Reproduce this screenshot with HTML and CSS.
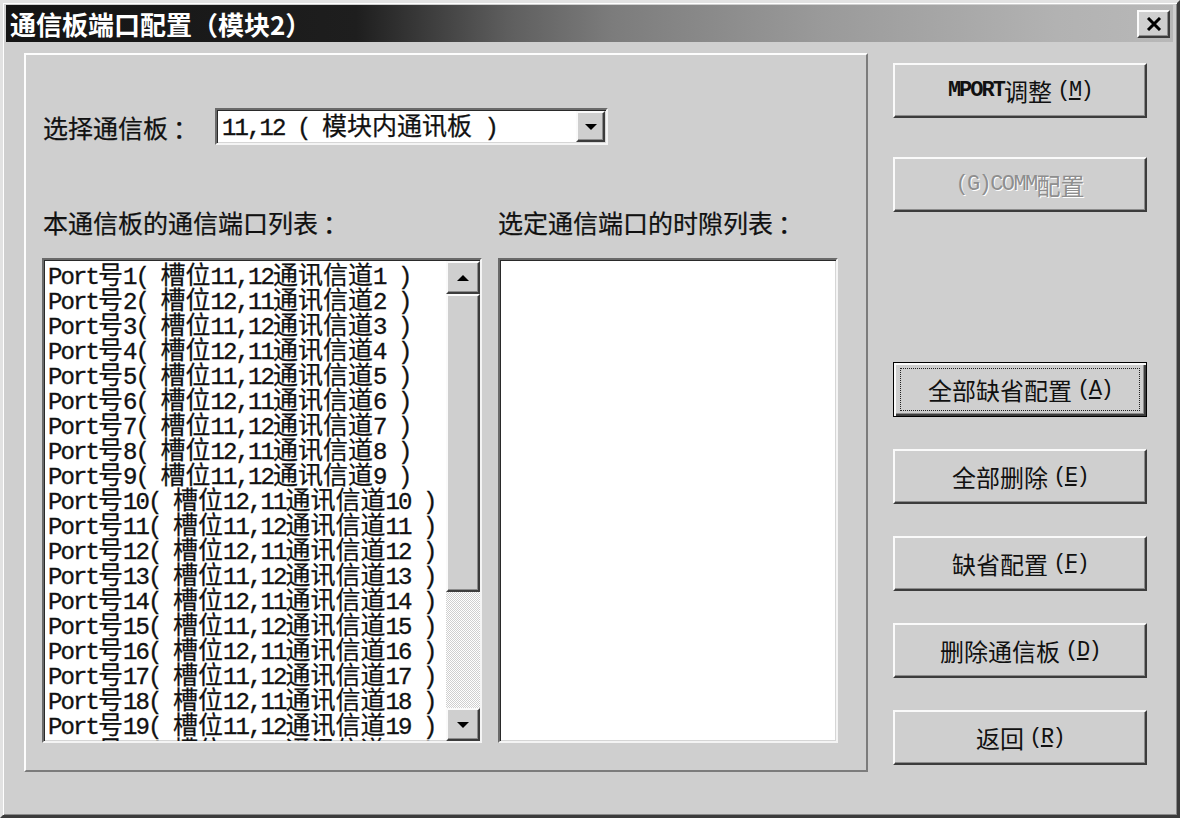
FILE: index.html
```html
<!DOCTYPE html>
<html lang="zh-CN">
<head>
<meta charset="utf-8">
<title>通信板端口配置（模块2）</title>
<link rel="stylesheet" href="styles.css">
</head>
<body>
<div class="window">
  <div class="titlebar">
    <div class="title">通信板端口配置（模块2）</div>
    <div class="close">
      <svg width="16" height="14" viewBox="0 0 16 14"><path d="M2 1 L14 13 M14 1 L2 13" stroke="#000" stroke-width="3" fill="none"/></svg>
    </div>
  </div>
  <div class="main">
    <div class="group">
      <div class="combo-row">
        <div class="label sel-label">选择通信板<span class="colon">：</span></div>
        <div class="combo">
          <div class="combo-text"><span class="a">11,12 ( </span>模块内通讯板<span class="a"> )</span></div>
          <div class="drop"><span class="tri-down"></span></div>
        </div>
      </div>
      <div class="labels">
        <div class="label lab1">本通信板的通信端口列表<span class="colon">：</span></div>
        <div class="label">选定通信端口的时隙列表<span class="colon">：</span></div>
      </div>
      <div class="lists">
        <div class="listbox list1">
          <div class="rows">
            <div class="row"><span class="a">Port</span>号<span class="a">1( </span>槽位<span class="a">11,12</span>通讯信道<span class="a">1 )</span></div>
            <div class="row"><span class="a">Port</span>号<span class="a">2( </span>槽位<span class="a">12,11</span>通讯信道<span class="a">2 )</span></div>
            <div class="row"><span class="a">Port</span>号<span class="a">3( </span>槽位<span class="a">11,12</span>通讯信道<span class="a">3 )</span></div>
            <div class="row"><span class="a">Port</span>号<span class="a">4( </span>槽位<span class="a">12,11</span>通讯信道<span class="a">4 )</span></div>
            <div class="row"><span class="a">Port</span>号<span class="a">5( </span>槽位<span class="a">11,12</span>通讯信道<span class="a">5 )</span></div>
            <div class="row"><span class="a">Port</span>号<span class="a">6( </span>槽位<span class="a">12,11</span>通讯信道<span class="a">6 )</span></div>
            <div class="row"><span class="a">Port</span>号<span class="a">7( </span>槽位<span class="a">11,12</span>通讯信道<span class="a">7 )</span></div>
            <div class="row"><span class="a">Port</span>号<span class="a">8( </span>槽位<span class="a">12,11</span>通讯信道<span class="a">8 )</span></div>
            <div class="row"><span class="a">Port</span>号<span class="a">9( </span>槽位<span class="a">11,12</span>通讯信道<span class="a">9 )</span></div>
            <div class="row"><span class="a">Port</span>号<span class="a">10( </span>槽位<span class="a">12,11</span>通讯信道<span class="a">10 )</span></div>
            <div class="row"><span class="a">Port</span>号<span class="a">11( </span>槽位<span class="a">11,12</span>通讯信道<span class="a">11 )</span></div>
            <div class="row"><span class="a">Port</span>号<span class="a">12( </span>槽位<span class="a">12,11</span>通讯信道<span class="a">12 )</span></div>
            <div class="row"><span class="a">Port</span>号<span class="a">13( </span>槽位<span class="a">11,12</span>通讯信道<span class="a">13 )</span></div>
            <div class="row"><span class="a">Port</span>号<span class="a">14( </span>槽位<span class="a">12,11</span>通讯信道<span class="a">14 )</span></div>
            <div class="row"><span class="a">Port</span>号<span class="a">15( </span>槽位<span class="a">11,12</span>通讯信道<span class="a">15 )</span></div>
            <div class="row"><span class="a">Port</span>号<span class="a">16( </span>槽位<span class="a">12,11</span>通讯信道<span class="a">16 )</span></div>
            <div class="row"><span class="a">Port</span>号<span class="a">17( </span>槽位<span class="a">11,12</span>通讯信道<span class="a">17 )</span></div>
            <div class="row"><span class="a">Port</span>号<span class="a">18( </span>槽位<span class="a">12,11</span>通讯信道<span class="a">18 )</span></div>
            <div class="row"><span class="a">Port</span>号<span class="a">19( </span>槽位<span class="a">11,12</span>通讯信道<span class="a">19 )</span></div>
            <div class="row"><span class="a">Port</span>号<span class="a">20( </span>槽位<span class="a">12,11</span>通讯信道<span class="a">20 )</span></div>
            <div class="row"><span class="a">Port</span>号<span class="a">21( </span>槽位<span class="a">11,12</span>通讯信道<span class="a">21 )</span></div>
          </div>
          <div class="scrollbar">
            <div class="sb-btn"><span class="tri-up"></span></div>
            <div class="thumb"></div>
            <div class="track"></div>
            <div class="sb-btn"><span class="tri-down"></span></div>
          </div>
        </div>
        <div class="listbox list2"></div>
      </div>
    </div>
    <div class="buttons">
      <div class="btn"><span class="m b">MPORT</span>调整 <span class="m">(<u>M</u>)</span></div>
      <div class="btn disabled b2"><span class="m">(G)COMM</span>配置</div>
      <div class="btn default b3"><span class="focus">全部缺省配置 <span class="m">(<u>A</u>)</span></span></div>
      <div class="btn">全部删除 <span class="m">(<u>E</u>)</span></div>
      <div class="btn">缺省配置 <span class="m">(<u>F</u>)</span></div>
      <div class="btn">删除通信板 <span class="m">(<u>D</u>)</span></div>
      <div class="btn">返回 <span class="m">(<u>R</u>)</span></div>
    </div>
  </div>
</div>
</body>
</html>
```
FILE: styles.css
```css
* { box-sizing: border-box; }

body {
  margin: 0;
  background: #cfcfcf;
  font-family: "Noto Sans CJK SC", sans-serif;
  color: #111;
}

.window {
  width: 1180px;
  height: 818px;
  background: #cfcfcf;
  border: 3px solid;
  border-color: #e2e2e2 #3c3c3c #3c3c3c #e2e2e2;
  box-shadow: inset 1px 1px #ffffff, inset -1px -1px #8a8a8a;
  padding: 2px 4px 0 3px;
}

.titlebar {
  height: 37px;
  display: flex;
  align-items: center;
  justify-content: space-between;
  padding: 0 3px 0 4px;
  background: linear-gradient(to right, #141414 0%, #1e1e1e 30%, #5e5e5e 43%, #7c7c7c 52%, #9a9a9a 70%, #b2b2b2 90%, #b8b8b8 100%);
}

.title {
  color: #fff;
  font-weight: 700;
  font-size: 26px;
  line-height: 37px;
  white-space: pre;
}

.close {
  width: 33px;
  height: 28px;
  background: #cfcfcf;
  border: 2px solid;
  border-color: #fafafa #3c3c3c #3c3c3c #fafafa;
  box-shadow: inset -1px -1px #8c8c8c;
  display: flex;
  align-items: center;
  justify-content: center;
}

.main {
  display: flex;
  margin-top: 11px;
  padding-left: 18px;
}

.group {
  width: 844px;
  height: 719px;
  border: 2px solid;
  border-color: #fdfdfd #7c7c7c #7c7c7c #fdfdfd;
  padding: 53px 0 0 16px;
}

.label {
  font-size: 25px;
  line-height: 30px;
  white-space: pre;
  -webkit-text-stroke: 0.25px #111;
}

.colon {
  padding-left: 5px;
}

.a {
  font-family: "Liberation Mono", monospace;
  font-size: 24px;
  letter-spacing: -1.9px;
  -webkit-text-stroke: 0.35px #111;
}

.m {
  font-family: "Liberation Mono", monospace;
  font-size: 22px;
  letter-spacing: -1.6px;
}

.m.b {
  font-weight: 700;
  letter-spacing: -2px;
}

.combo-row {
  display: flex;
  align-items: center;
  height: 37px;
}

.sel-label {
  width: 173px;
  padding-left: 1px;
}

.combo {
  width: 393px;
  height: 37px;
  background: #fff;
  border: 2px solid;
  border-color: #6a6a6a #f4f4f4 #f4f4f4 #6a6a6a;
  box-shadow: inset 1px 1px #2a2a2a, inset -1px -1px #d6d6d6;
  display: flex;
  align-items: center;
  justify-content: space-between;
  padding: 0 1px 0 5px;
}

.combo-text {
  font-size: 25px;
  line-height: 30px;
  white-space: pre;
  -webkit-text-stroke: 0.25px #111;
}

.drop {
  width: 29px;
  height: 31px;
  background: #cfcfcf;
  border: 2px solid;
  border-color: #fafafa #3c3c3c #3c3c3c #fafafa;
  box-shadow: inset -1px -1px #8c8c8c;
  display: flex;
  align-items: center;
  justify-content: center;
}

.tri-down {
  width: 0;
  height: 0;
  border-left: 6px solid transparent;
  border-right: 6px solid transparent;
  border-top: 6px solid #000;
}

.tri-up {
  width: 0;
  height: 0;
  border-left: 6px solid transparent;
  border-right: 6px solid transparent;
  border-bottom: 6px solid #000;
}

.labels {
  display: flex;
  margin-top: 62px;
}

.lab1 {
  width: 456px;
  padding-left: 1px;
}

.lists {
  display: flex;
  gap: 16px;
  margin-top: 21px;
}

.listbox {
  height: 485px;
  background: #fff;
  border: 2px solid;
  border-color: #6a6a6a #f4f4f4 #f4f4f4 #6a6a6a;
  box-shadow: inset 1px 1px #2a2a2a, inset -1px -1px #d6d6d6;
}

.list1 {
  width: 440px;
  display: flex;
  overflow: hidden;
}

.list2 {
  width: 340px;
}

.rows {
  flex: 1;
  padding: 1px 0 0 4px;
  overflow: hidden;
}

.row {
  font-size: 25px;
  line-height: 25px;
  height: 25px;
  white-space: pre;
  -webkit-text-stroke: 0.25px #111;
}

.scrollbar {
  width: 34px;
  display: flex;
  flex-direction: column;
  padding: 1px 0 0 0;
}

.sb-btn {
  height: 33px;
  background: #cfcfcf;
  border: 2px solid;
  border-color: #fafafa #3c3c3c #3c3c3c #fafafa;
  box-shadow: inset -1px -1px #8c8c8c;
  display: flex;
  align-items: center;
  justify-content: center;
}

.thumb {
  height: 298px;
  background: #cfcfcf;
  border: 2px solid;
  border-color: #fafafa #3c3c3c #3c3c3c #fafafa;
  box-shadow: inset -1px -1px #8c8c8c;
}

.track {
  flex: 1;
  background: repeating-conic-gradient(#ffffff 0 25%, #cfcfcf 0 50%) 0 0 / 2px 2px;
}

.buttons {
  display: flex;
  flex-direction: column;
  width: 254px;
  margin-left: 25px;
  padding-top: 10px;
}

.btn {
  height: 55px;
  margin-top: 32px;
  background: #cfcfcf;
  border: 2px solid;
  border-color: #fafafa #3c3c3c #3c3c3c #fafafa;
  box-shadow: inset -1px -1px #8c8c8c;
  display: flex;
  align-items: center;
  justify-content: center;
  font-size: 24px;
  white-space: pre;
  color: #111;
}

.btn:first-child {
  margin-top: 0;
}

.b2 {
  margin-top: 39px;
}

.b3 {
  margin-top: 150px;
}

.disabled {
  color: #8e8e8e;
  text-shadow: 1px 1px #ffffff;
}

.default {
  border: 1px solid #000;
  box-shadow: inset 2px 2px #fafafa, inset -2px -2px #3c3c3c, inset -3px -3px #8c8c8c;
  padding: 5px 6px;
}

.focus {
  flex: 1;
  align-self: stretch;
  border: 1px dotted #222;
  display: flex;
  align-items: center;
  justify-content: center;
}
```
